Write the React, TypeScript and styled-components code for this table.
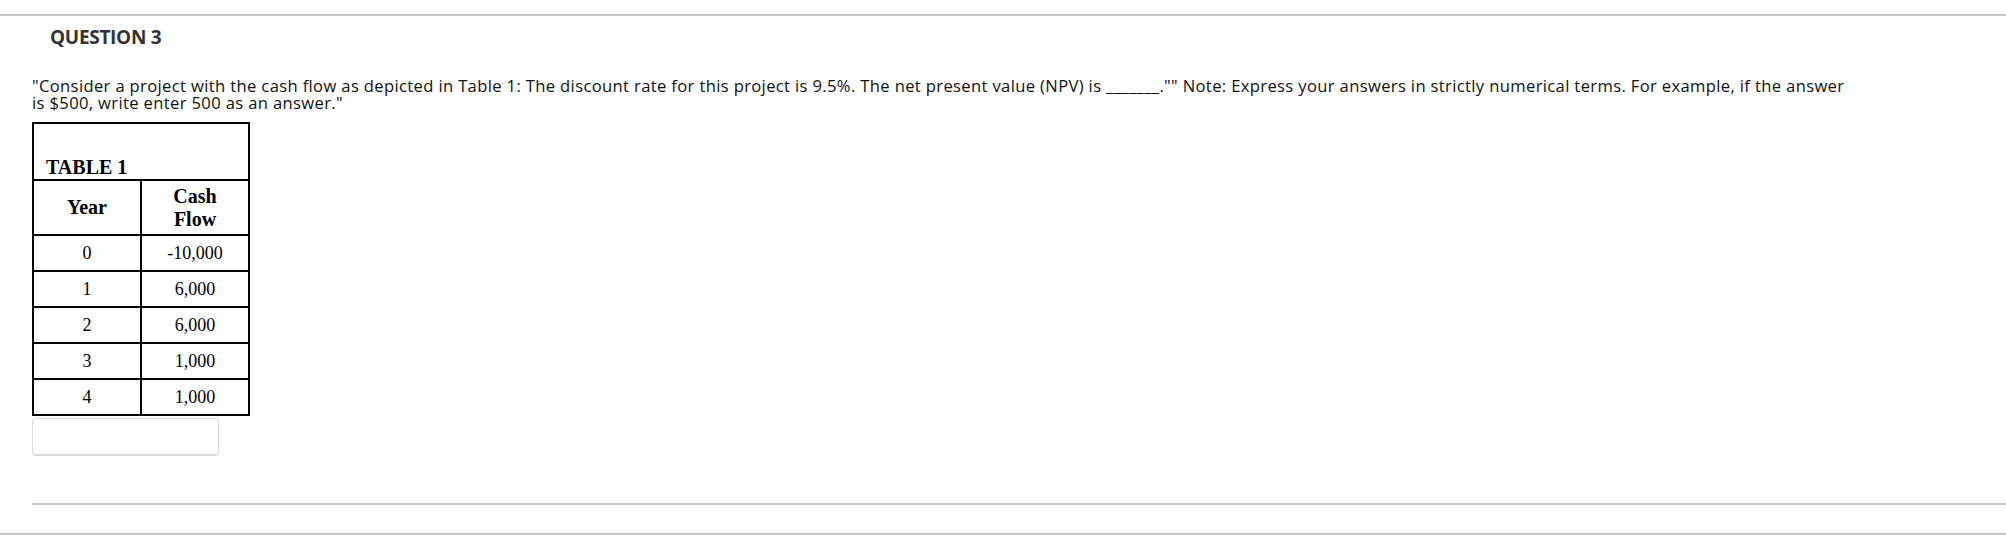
import React from "react";
import styled, { createGlobalStyle } from "styled-components";

const GlobalStyle = createGlobalStyle`
  html, body {
    margin: 0;
    padding: 0;
    background: #fff;
  }
  body {
    font-family: "Open Sans", "Liberation Sans", sans-serif;
    color: #111;
  }
`;

const rows = [
  { year: "0", flow: "-10,000" },
  { year: "1", flow: "6,000" },
  { year: "2", flow: "6,000" },
  { year: "3", flow: "1,000" },
  { year: "4", flow: "1,000" },
];

function App() {
  return (
    <Page>
      <GlobalStyle />
      <Rule />
      <QuestionHeader>
        <h3>QUESTION 3</h3>
      </QuestionHeader>
      <QuestionBody>
        <p className="prompt">
          "Consider a project with the cash flow as depicted in Table 1: The
          discount rate for this project is 9.5%. The net present value (NPV)
          is _______."" Note: Express your answers in strictly numerical
          terms. For example, if the answer is $500, write enter 500 as an
          answer."
        </p>
        <CashTable>
          <tbody>
            <tr>
              <CaptionCell colSpan={2}>TABLE 1</CaptionCell>
            </tr>
            <tr>
              <HeadCell>Year</HeadCell>
              <HeadCell>
                Cash
                <br />
                Flow
              </HeadCell>
            </tr>
            {rows.map((row, index) => {
              return (
                <tr key={index}>
                  <Cell>{row.year}</Cell>
                  <Cell>{row.flow}</Cell>
                </tr>
              );
            })}
          </tbody>
        </CashTable>
        <AnswerInput type="text" aria-label="answer" />
      </QuestionBody>
      <Divider />
      <Rule />
    </Page>
  );
}

const Page = styled.div`
  padding-top: 14px;
  width: 2006px;
`;

const Rule = styled.div`
  height: 2px;
  background: #c8c8c8;
`;

const QuestionHeader = styled.div`
  padding: 0 0 0 50px;
  h3 {
    margin: 0;
    padding-top: 8px;
    font-size: 19px;
    line-height: 26px;
    font-weight: 700;
    color: #333;
    letter-spacing: -0.3px;
  }
`;

const QuestionBody = styled.div`
  padding: 0 0 0 32px;

  .prompt {
    margin: 27px 0 0 0;
    width: 1818px;
    font-size: 16.6px;
    letter-spacing: 0.35px;
    line-height: 17px;
    color: #111;
  }
`;

const CashTable = styled.table`
  margin-top: 11px;
  border-collapse: collapse;
  width: 218px;
  font-family: "Liberation Serif", "Times New Roman", serif;
  color: #000;

  td {
    border: 2px solid #000;
    width: 50%;
  }
`;

const CaptionCell = styled.td`
  height: 54px;
  padding: 0 0 1px 12px;
  vertical-align: bottom;
  text-align: left;
  font-size: 20px;
  font-weight: 700;
  line-height: 22px;
`;

const HeadCell = styled.td`
  height: 49px;
  padding: 2px 4px;
  text-align: center;
  vertical-align: middle;
  font-size: 20px;
  font-weight: 700;
  line-height: 23px;
`;

const Cell = styled.td`
  height: 34px;
  padding: 0 4px;
  text-align: center;
  vertical-align: middle;
  font-size: 18px;
  line-height: 20px;
`;

const AnswerInput = styled.input`
  display: block;
  margin-top: 2px;
  box-sizing: border-box;
  width: 187px;
  height: 38px;
  border: 1px solid #dcdcdc;
  border-bottom-width: 2px;
  border-radius: 4px;
  background: #fff;
  outline: none;
`;

const Divider = styled.div`
  margin: 47px 0 28px 32px;
  height: 2px;
  background: #c8c8c8;
`;

export default App;
